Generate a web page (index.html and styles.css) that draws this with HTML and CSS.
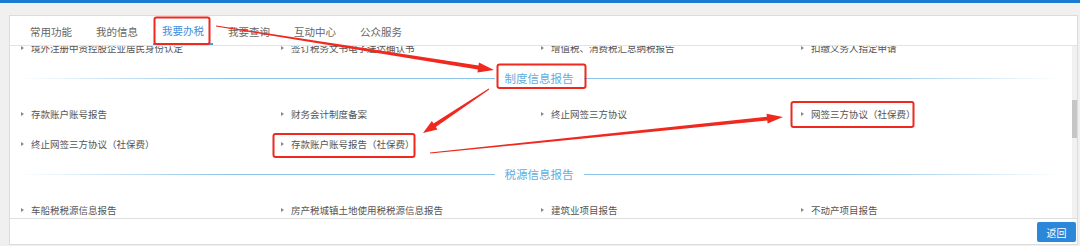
FILE: index.html
```html
<!DOCTYPE html>
<html lang="zh-CN">
<head>
<meta charset="utf-8">
<link rel="stylesheet" href="styles.css">
</head>
<body>
<div class="topbar"></div>
<div class="page">
  <div class="panel">
    <div class="tabs">
      <span class="tab">常用功能</span>
      <span class="tab">我的信息</span>
      <span class="tab active">我要办税</span>
      <span class="tab">我要查询</span>
      <span class="tab">互动中心</span>
      <span class="tab">公众服务</span>
    </div>
    <div class="body">
      <div class="viewport">
        <div class="scroller">
          <ul class="grid">
            <li>境外注册中资控股企业居民身份认定</li>
            <li>签订税务文书电子送达确认书</li>
            <li>增值税、消费税汇总纳税报告</li>
            <li>扣缴义务人指定申请</li>
          </ul>
          <div class="sect"><span class="line l"></span><span class="title">制度信息报告</span><span class="line r"></span></div>
          <ul class="grid">
            <li>存款账户账号报告</li>
            <li>财务会计制度备案</li>
            <li>终止网签三方协议</li>
            <li>网签三方协议（社保费）</li>
            <li>终止网签三方协议（社保费）</li>
            <li>存款账户账号报告（社保费）</li>
          </ul>
          <div class="sect"><span class="line l"></span><span class="title">税源信息报告</span><span class="line r"></span></div>
          <ul class="grid">
            <li>车船税税源信息报告</li>
            <li>房产税城镇土地使用税税源信息报告</li>
            <li>建筑业项目报告</li>
            <li>不动产项目报告</li>
          </ul>
        </div>
      </div>
      <div class="scrollbar"><div class="thumb"></div></div>
    </div>
    <div class="footer"><button class="btn">返回</button></div>
  </div>
</div>
<svg class="marks" width="1080" height="246" viewBox="0 0 1080 246">
  <g fill="none" stroke="#f0281e" stroke-width="2">
    <rect x="154.5" y="17.5" width="55" height="26.5" rx="2"/>
    <rect x="497.5" y="64.5" width="88" height="23.5" rx="2"/>
    <rect x="791.5" y="102" width="122" height="25" rx="2"/>
    <rect x="273.5" y="134" width="141" height="23" rx="2"/>
  </g>
  <g fill="#f0281e">
    <polygon points="216.08,25.51 478.51,65.52 478.98,62.56 494,70 477.42,72.44 477.89,69.48 215.92,26.49"/>
    <polygon points="489.28,89.42 435.76,126.89 437.43,129.39 423,133 431.88,121.07 433.54,123.57 488.72,88.58"/>
    <polygon points="429.95,152.5 766.88,116.63 766.57,113.65 783,117 767.59,123.59 767.28,120.61 430.05,153.5"/>
  </g>
</svg>
</body>
</html>
```
FILE: styles.css
```css
html, body {
  margin: 0;
  padding: 0;
}
body {
  width: 1080px;
  height: 246px;
  background: #f0f0f0;
  font-family: "Noto Sans CJK SC", "Noto Sans", sans-serif;
  color: #555;
  overflow: hidden;
  position: relative;
}
.topbar {
  height: 3px;
  background: #1b7bd3;
}
.page {
  padding: 12px 2px 0 9px;
}
.panel {
  background: #fff;
  border: 1px solid #dcdcdc;
  height: 228px;
  display: flex;
  flex-direction: column;
}
.tabs {
  height: 29px;
  border-bottom: 1px solid #e3e3e3;
  display: flex;
  align-items: stretch;
  padding-left: 11px;
  gap: 6px;
}
.tab {
  width: 60px;
  display: flex;
  align-items: center;
  justify-content: center;
  font-size: 10.5px;
  color: #666;
  box-sizing: border-box;
  padding-top: 1px;
}
.tab.active {
  color: #3b8fde;
  border-bottom: 2px solid #4a9be2;
  padding-top: 2px;
}
.body {
  flex: 1;
  display: flex;
  min-height: 0;
  border-bottom: 1px solid #dedede;
}
.viewport {
  flex: 1;
  overflow: hidden;
}
.scroller {
  margin-top: -13px;
}
.grid {
  list-style: none;
  margin: 0;
  padding: 0 0 0 11px;
  display: grid;
  grid-template-columns: repeat(4, 260px);
}
.grid li {
  height: 30px;
  display: flex;
  align-items: center;
  font-size: 9.5px;
  color: #555;
  white-space: nowrap;
}
.grid li::before {
  content: "";
  width: 0;
  height: 0;
  border-left: 3px solid #888;
  border-top: 2.5px solid transparent;
  border-bottom: 2.5px solid transparent;
  margin-right: 7px;
}
.sect {
  height: 36px;
  display: flex;
  align-items: flex-start;
  padding: 0 10px 0 6px;
}
.sect .line {
  flex: 1;
  height: 1px;
  margin-top: 15px;
}
.sect .line.l {
  background: linear-gradient(to right, rgba(140,196,232,0), #8cc4e8 45%, #8cc4e8);
}
.sect .line.r {
  background: linear-gradient(to right, #8cc4e8, #8cc4e8 55%, rgba(140,196,232,0));
}
.sect .title {
  font-size: 11.5px;
  line-height: 16px;
  margin-top: 7px;
  padding: 0 10px;
  color: #62ade0;
}
.scrollbar {
  width: 5px;
  background: #f1f1f1;
}
.thumb {
  margin-top: 54px;
  height: 38px;
  background: #c6c6c6;
}
.footer {
  height: 25px;
  display: flex;
  justify-content: flex-end;
  align-items: center;
  padding-right: 1px;
}
.btn {
  width: 39px;
  height: 20px;
  border: none;
  border-radius: 2px;
  background: #2b87da;
  color: #fff;
  font-family: "Noto Sans CJK SC", sans-serif;
  font-size: 10px;
  padding: 0;
  margin-top: 1px;
}
.marks {
  position: absolute;
  left: 0;
  top: 0;
  pointer-events: none;
}
```
